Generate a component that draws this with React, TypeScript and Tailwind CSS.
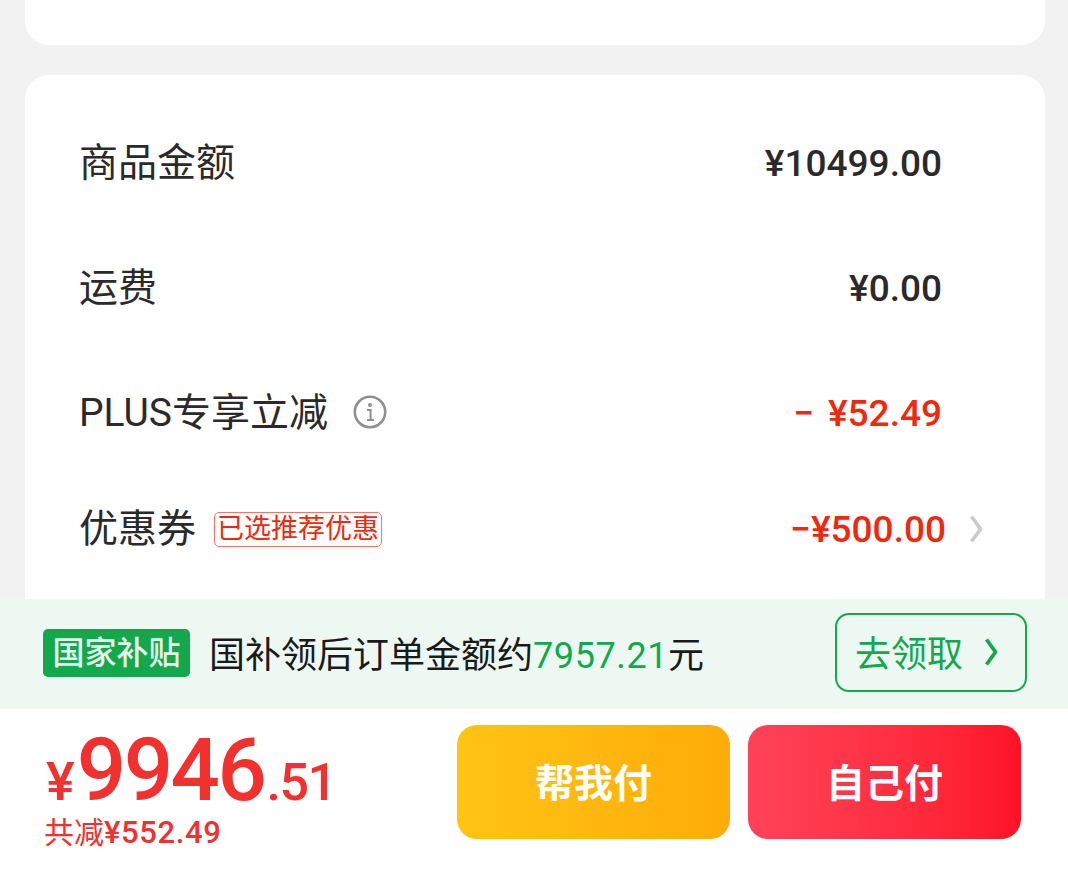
const cjk = "font-['Roboto','Noto_Sans_CJK_SC',sans-serif]";

const Chevron = ({ className }: { className: string }) => (
  <svg viewBox="0 0 14 30" fill="none" stroke="currentColor" strokeWidth="3.8" className={className}>
    <path d="M2.5 2.5 L11.5 15 L2.5 27.5" strokeLinejoin="round" />
  </svg>
);

const InfoIcon = () => (
  <svg viewBox="0 0 34 34" className="mb-[3px] ml-[25px] h-[34px] w-[34px] text-[#8f8f8f]" fill="none">
    <circle cx="17" cy="17" r="15.2" stroke="currentColor" strokeWidth="2.6" />
    <circle cx="17" cy="10" r="2" fill="currentColor" />
    <path d="M14 15 H17.6 V24.5 M14 25 H21" stroke="currentColor" strokeWidth="2" />
  </svg>
);

export default function App() {
  return (
    <div className={`flex h-[876px] w-[1068px] flex-col overflow-hidden bg-[#f2f2f2] ${cjk}`}>
      <div className="flex min-h-0 flex-1 flex-col gap-[30px] overflow-hidden pl-[25px] pr-[23px]">
        <div className="h-[45px] shrink-0 rounded-b-[24px] bg-white" />
        <div className="flex-1 rounded-t-[24px] bg-white pl-[54px] pr-[60px] pt-[25px]">
          <div className="flex h-[126px] items-center justify-between pr-[43px] pt-[1px]">
            <span className="text-[39px] leading-none text-[#2a2a2a]">商品金额</span>
            <span className="text-[37px] font-medium leading-none text-[#2a2a2a]">¥10499.00</span>
          </div>
          <div className="flex h-[124px] items-center justify-between pr-[43px]">
            <span className="text-[39px] leading-none text-[#2a2a2a]">运费</span>
            <span className="text-[37px] font-medium leading-none text-[#2a2a2a]">¥0.00</span>
          </div>
          <div className="flex h-[126px] items-center justify-between pr-[43px]">
            <span className="flex items-center">
              <span className="text-[39px] leading-none text-[#2a2a2a]">PLUS专享立减</span>
              <InfoIcon />
            </span>
            <span className="text-[37px] font-medium leading-none text-[#f0290e]">
              <span className="mr-[14px]">−</span>¥52.49
            </span>
          </div>
          <div className="flex h-[106px] items-center justify-between pr-[2px]">
            <span className="flex items-center">
              <span className="text-[39px] leading-none text-[#2a2a2a]">优惠券</span>
              <span className="ml-[18px] rounded-[5px] border border-[#f0776a] px-[2px] py-[1px] text-[27px] leading-[31px] text-[#f0290e]">
                已选推荐优惠
              </span>
            </span>
            <span className="flex items-center gap-[23px]">
              <span className="text-[37px] font-medium leading-none text-[#f0290e]">−¥500.00</span>
              <Chevron className="h-[30px] w-[14px] text-[#cccccc]" />
            </span>
          </div>
        </div>
      </div>

      <div className="flex h-[110px] shrink-0 items-center justify-between bg-[#edf8f3] pl-[43px] pr-[41px]">
        <div className="flex items-center">
          <span className="mb-[2px] flex h-[48px] w-[147px] items-center justify-center rounded-[5px] bg-[#12a84b] text-[32px] font-medium leading-none text-[#e6f6ec]">
            国家补贴
          </span>
          <span className="ml-[19px] pt-[3px] text-[36px] leading-none text-[#1a1a1a]">
            国补领后订单金额约<span className="tracking-[0.6px] text-[#12a84b]">7957.21</span>元
          </span>
        </div>
        <div className="mb-[4px] flex h-[79px] w-[192px] items-center gap-[21px] rounded-[14px] border-[2px] border-[#12a84b] pl-[18px] text-[#12a84b]">
          <span className="pt-[5px] text-[36px] leading-none">去领取</span>
          <Chevron className="h-[30px] w-[14px]" />
        </div>
      </div>

      <div className="flex h-[167px] shrink-0 justify-between bg-white pl-[46px] pr-[47px] pt-[16px]">
        <div className="flex flex-col text-[#f2302e]">
          <div className="mt-[5px] flex h-[80px] items-baseline">
            <span className="text-[54px] font-medium leading-[80px]">¥</span>
            <span className="ml-[2px] text-[87px] font-medium leading-[80px] tracking-[-2.5px]">9946</span>
            <span className="ml-[2px] text-[52px] font-medium leading-[80px] tracking-[-1.5px]">.51</span>
          </div>
          <span className="-ml-[2px] mt-[7px] flex items-baseline text-[30px] leading-none">
            共减<span className="text-[31px] font-medium tracking-[0.6px]">¥552.49</span>
          </span>
        </div>
        <div className="flex gap-[18px]">
          <button className="flex h-[114px] w-[273px] items-center justify-center rounded-[20px] bg-linear-to-r from-[#ffc414] to-[#ffab08] pt-[5px] text-[39px] font-bold text-white">
            帮我付
          </button>
          <button className="flex h-[114px] w-[273px] items-center justify-center rounded-[20px] bg-linear-to-r from-[#ff4259] to-[#ff1126] pt-[5px] text-[39px] font-bold text-white">
            自己付
          </button>
        </div>
      </div>
    </div>
  );
}
